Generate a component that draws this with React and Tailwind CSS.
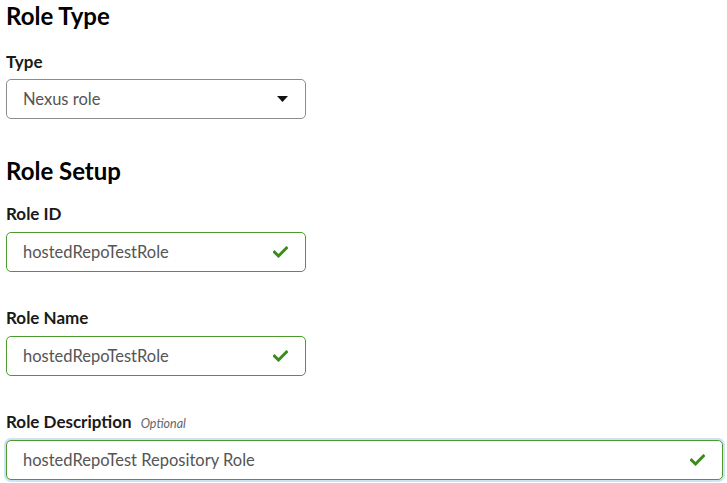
import React from 'react';

const font = { fontFamily: 'Lato, "Noto Sans", sans-serif' };

const Check = () => (
  <svg width="15" height="12" viewBox="0 0 15 12" className="shrink-0">
    <path d="M1.5 6.2 L5.5 10 L13.5 2" fill="none" stroke="#3d8b1e" strokeWidth="3" strokeLinecap="square" />
  </svg>
);

const ValidInput = ({ value, wide, focused }) => (
  <div
    className={`flex items-center justify-between h-[40px] rounded-[5px] border border-[#4e9a2c] bg-white pl-[16px] pr-[17px] ${
      wide ? 'w-[717px]' : 'w-[300px]'
    } ${focused ? 'shadow-[0_0_0_2px_#cfe3f3]' : ''}`}
  >
    <span className="text-[16.5px] text-[#555]">{value}</span>
    <Check />
  </div>
);

const Label = ({ children, optional }) => (
  <div className="flex items-baseline gap-[9px] h-[20px] mb-[11px]">
    <span className="text-[17px] font-bold text-[#1a1a1a]">{children}</span>
    {optional && <span className="text-[12.5px] italic text-[#666]">Optional</span>}
  </div>
);

export default function App() {
  return (
    <div className="bg-white w-[727px] h-[483px] overflow-hidden pl-[6px] pt-[1px]" style={font}>
      {/* Role type */}
      <h2 className="text-[24px] font-bold text-black leading-[30px] mb-[18px]">Role Type</h2>
      <Label>Type</Label>
      <div className="flex items-center justify-between w-[300px] h-[40px] rounded-[5px] border border-[#8c8c8c] bg-white pl-[16px] pr-[17px] -mt-[1px]">
        <span className="text-[16.5px] text-[#555]">Nexus role</span>
        <svg width="11" height="6" viewBox="0 0 11 6">
          <path d="M0 0 H11 L5.5 6 Z" fill="#111" />
        </svg>
      </div>

      {/* Role setup */}
      <h2 className="text-[24px] font-bold text-black leading-[30px] mt-[37px] mb-[15px]">Role Setup</h2>
      <Label>Role ID</Label>
      <ValidInput value="hostedRepoTestRole" />

      <div className="mt-[33px]">
        <Label>Role Name</Label>
        <ValidInput value="hostedRepoTestRole" />
      </div>

      <div className="mt-[33px]">
        <Label optional>Role Description</Label>
        <ValidInput value="hostedRepoTest Repository Role" wide focused />
      </div>
    </div>
  );
}
